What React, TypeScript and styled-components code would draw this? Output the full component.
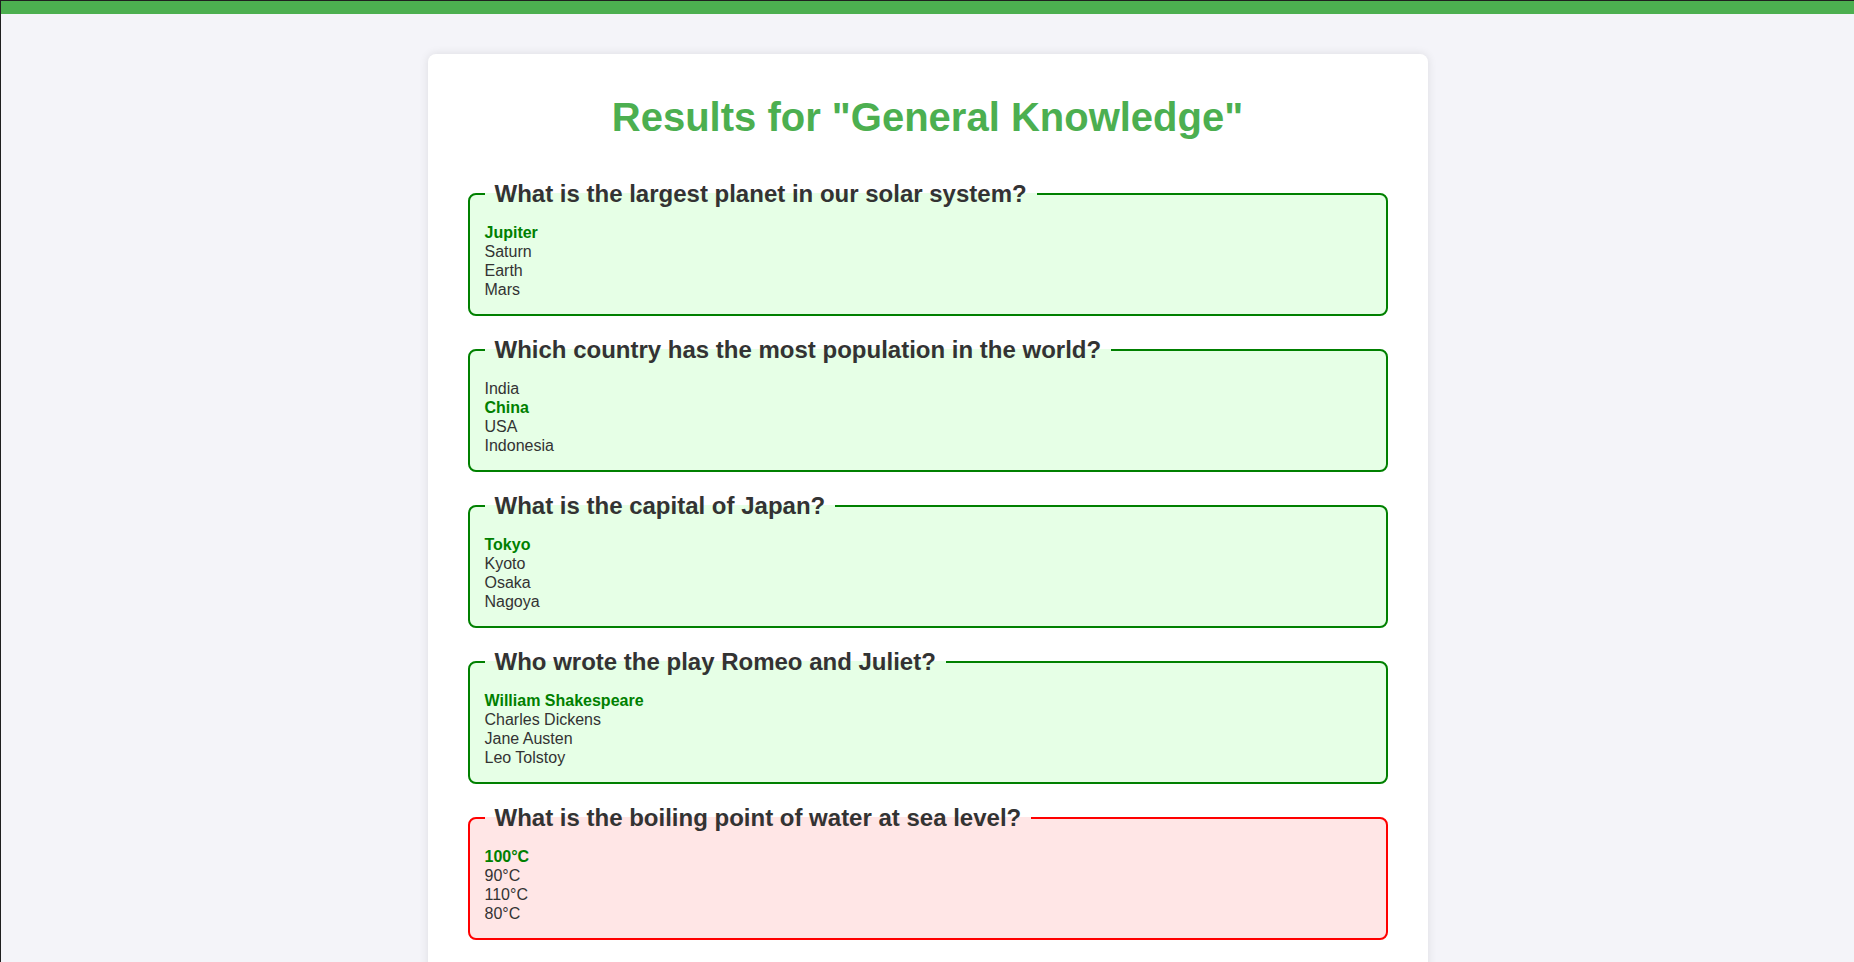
import React from "react";
import styled, { createGlobalStyle } from "styled-components";

const GlobalStyle = createGlobalStyle`
  html, body {
    margin: 0;
    padding: 0;
    background: #f4f4f9;
    font-family: "Liberation Sans", Arial, Helvetica, sans-serif;
    color: #333;
  }
  * { box-sizing: border-box; }
`;

const Page = styled.div`
  min-height: 100vh;
  display: flex;
  flex-direction: column;
  align-items: center;
  border-top: 1px solid #1f1f1f;
  border-left: 1px solid #1f1f1f;
`;

const TopBar = styled.header`
  align-self: stretch;
  height: 13px;
  background: #4caf50;
`;

const Card = styled.main`
  width: 1000px;
  margin-top: 40px;
  margin-bottom: 40px;
  padding: 41px 40px 40px;
  background: #fff;
  border-radius: 8px;
  box-shadow: 0 0 10px rgba(0, 0, 0, 0.1);
`;

const Title = styled.h1`
  margin: 0 0 40px;
  text-align: center;
  font-size: 40px;
  font-weight: bold;
  color: #4caf50;
`;

const QuestionBox = styled.fieldset<{ $correct: boolean }>`
  margin: 0 0 20px;
  padding: 15px;
  border: 2px solid ${(p) => (p.$correct ? "#008000" : "#ff0000")};
  border-radius: 8px;
  background: ${(p) => (p.$correct ? "#e6ffe6" : "#ffe6e6")};
  min-width: 0;
`;

const Question = styled.legend`
  padding: 0 10px;
  font-size: 24px;
  font-weight: bold;
  color: #333;
`;

const Options = styled.div`
  display: flex;
  flex-direction: column;
`;

const Option = styled.div<{ $answer: boolean }>`
  font-size: 16px;
  line-height: 19px;
  color: ${(p) => (p.$answer ? "#008000" : "#333")};
  font-weight: ${(p) => (p.$answer ? "bold" : "normal")};
`;

type Q = { question: string; options: string[]; answer: number; correct: boolean };

const questions: Q[] = [
  {
    question: "What is the largest planet in our solar system?",
    options: ["Jupiter", "Saturn", "Earth", "Mars"],
    answer: 0,
    correct: true,
  },
  {
    question: "Which country has the most population in the world?",
    options: ["India", "China", "USA", "Indonesia"],
    answer: 1,
    correct: true,
  },
  {
    question: "What is the capital of Japan?",
    options: ["Tokyo", "Kyoto", "Osaka", "Nagoya"],
    answer: 0,
    correct: true,
  },
  {
    question: "Who wrote the play Romeo and Juliet?",
    options: ["William Shakespeare", "Charles Dickens", "Jane Austen", "Leo Tolstoy"],
    answer: 0,
    correct: true,
  },
  {
    question: "What is the boiling point of water at sea level?",
    options: ["100°C", "90°C", "110°C", "80°C"],
    answer: 0,
    correct: false,
  },
];

export default function App() {
  return (
    <>
      <GlobalStyle />
      <Page>
        <TopBar />
        <Card>
          <Title>Results for "General Knowledge"</Title>
          {questions.map((q) => (
            <QuestionBox key={q.question} $correct={q.correct}>
              <Question>{q.question}</Question>
              <Options>
                {q.options.map((o, i) => (
                  <Option key={o} $answer={i === q.answer}>
                    {o}
                  </Option>
                ))}
              </Options>
            </QuestionBox>
          ))}
        </Card>
      </Page>
    </>
  );
}
